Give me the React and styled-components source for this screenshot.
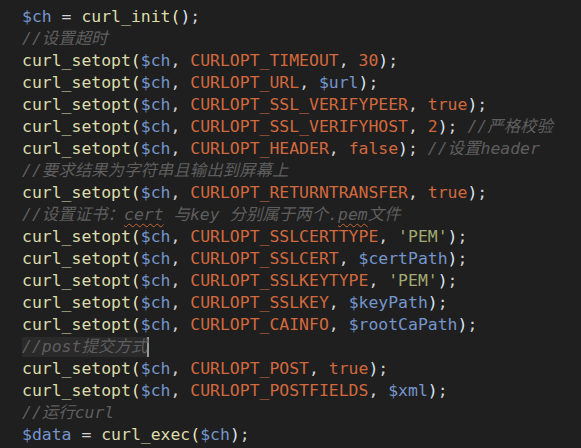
import styled, { createGlobalStyle } from 'styled-components';

const GlobalStyle = createGlobalStyle`
  html, body {
    margin: 0;
    padding: 0;
    background: #1f1f1f;
  }
`;

const code = [
  [['v', '$ch'], ['p', ' = '], ['f', 'curl_init'], ['po', '('], ['pc', ')'], ['p', ';']],
  [['c', '//设置超时']],
  'TIMEOUT|30',
  'URL|$url',
  'SSL_VERIFYPEER|true',
  ['SSL_VERIFYHOST|2', '//严格校验'],
  ['HEADER|false', '//设置header'],
  [['c', '//要求结果为字符串且输出到屏幕上']],
  'RETURNTRANSFER|true',
  [['c', '//设置证书：'], ['cw', 'cert'], ['c', ' 与key 分别属于两个.'], ['cw', 'pem'], ['c', '文件']],
  "SSLCERTTYPE|'PEM'",
  'SSLCERT|$certPath',
  "SSLKEYTYPE|'PEM'",
  'SSLKEY|$keyPath',
  'CAINFO|$rootCaPath',
  'CURSOR',
  'POST|true',
  'POSTFIELDS|$xml',
  [['c', '//运行curl']],
  [['v', '$data'], ['p', ' = '], ['f', 'curl_exec'], ['po', '('], ['v', '$ch'], ['pc', ')'], ['p', ';']],
];

const valueKind = (val) => {
  if (val.startsWith('$')) return 'v';
  if (val.startsWith("'")) return 's';
  return 'k';
};

const setopt = (spec) => {
  const [name, val] = spec.split('|');
  return [
    ['f', 'curl_setopt'],
    ['po', '('],
    ['v', '$ch'],
    ['p', ', '],
    ['k', 'CURLOPT_' + name],
    ['p', ', '],
    [valueKind(val), val],
    ['pc', ')'],
    ['p', ';'],
  ];
};

const colors = {
  f: '#dcdcaa',
  v: '#7596cc',
  k: '#d2693e',
  s: '#a2ab72',
  p: '#d4d4d4',
  po: '#efe8c0',
  pc: '#dbe6f5',
  c: '#5e5e5e',
  cw: '#5e5e5e',
};

const Editor = styled.div`
  width: 581px;
  height: 448px;
  overflow: hidden;
  box-sizing: border-box;
  padding: 6px 0 0 22px;
  background: #1f1f1f;
  font-family: 'DejaVu Sans Mono', 'Noto Sans CJK SC', monospace;
  font-size: 16.45px;
`;

const Line = styled.div`
  height: 22px;
  line-height: 22px;
  white-space: pre;
`;

const Token = styled.span`
  color: ${(p) => colors[p.$kind]};
  font-style: ${(p) => (p.$kind === 'c' || p.$kind === 'cw' ? 'italic' : 'normal')};
  text-decoration: ${(p) => (p.$kind === 'cw' ? 'underline wavy #c8662e' : 'none')};
  text-decoration-thickness: 1px;
  text-underline-offset: 3px;
`;

const CursorBox = styled.span`
  display: inline-block;
  height: 20px;
  line-height: 20px;
  vertical-align: top;
  margin-top: 1px;
  background: #2a2a2a;
  border-right: 2px solid #9a9a9a;
`;

const renderTokens = (tokens) =>
  tokens.map(([kind, text], i) => (
    <Token key={i} $kind={kind}>
      {text}
    </Token>
  ));

const App = () => (
  <>
    <GlobalStyle />
    <Editor>
      {code.map((line, i) => {
        if (line === 'CURSOR') {
          return (
            <Line key={i}>
              <CursorBox>{renderTokens([['c', '//post提交方式']])}</CursorBox>
            </Line>
          );
        }
        let tokens;
        if (typeof line === 'string') tokens = setopt(line);
        else if (typeof line[0] === 'string') tokens = [...setopt(line[0]), ['p', ' '], ['c', line[1]]];
        else tokens = line;
        return <Line key={i}>{renderTokens(tokens)}</Line>;
      })}
    </Editor>
  </>
);

export default App;
